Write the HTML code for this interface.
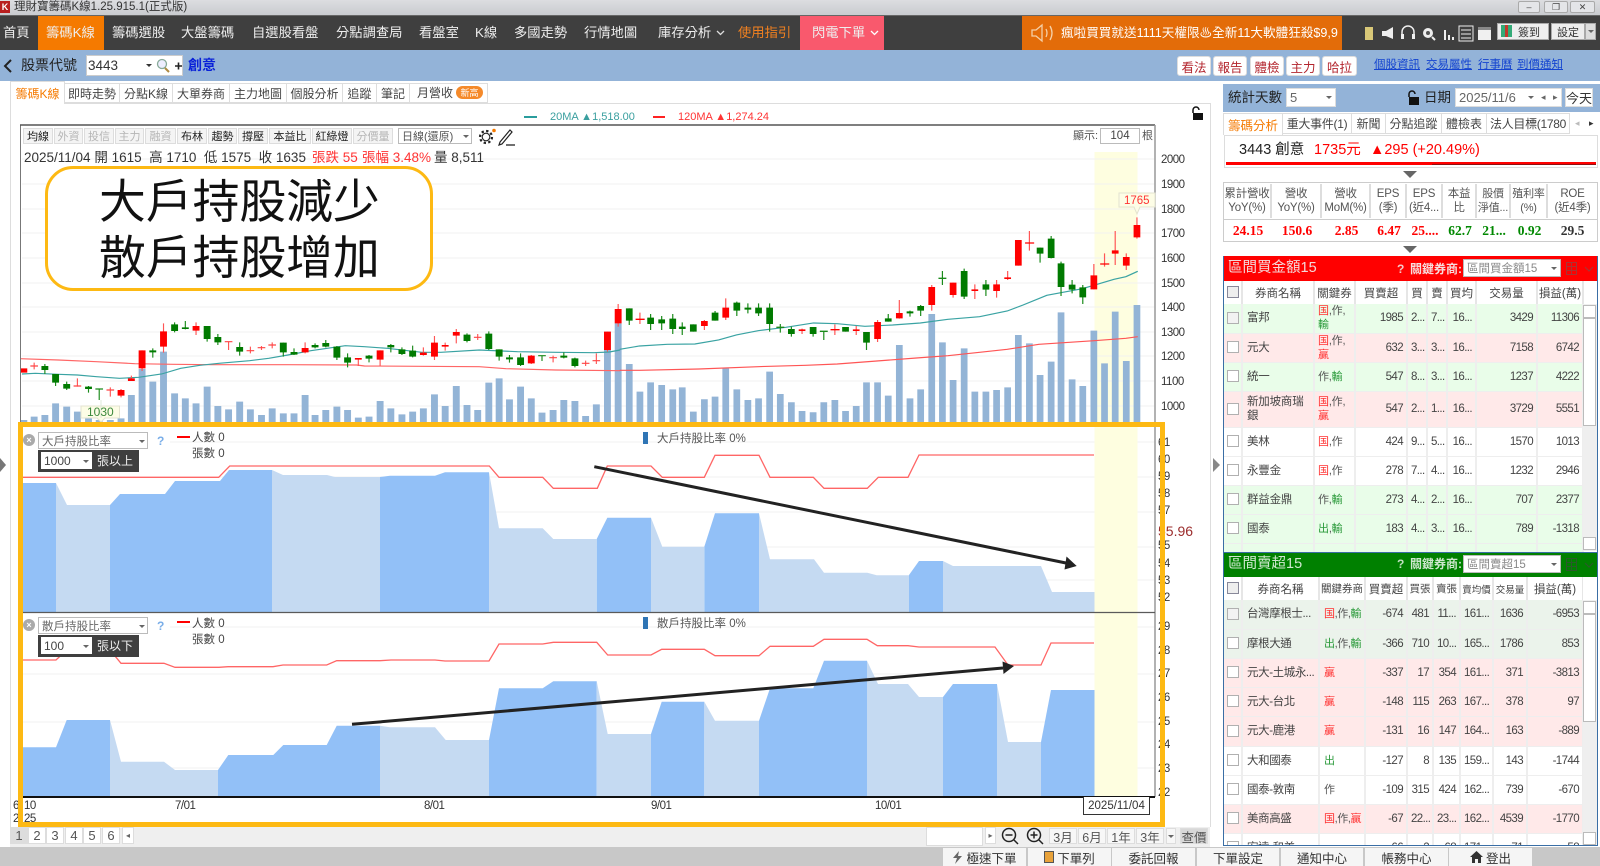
<!DOCTYPE html>
<html lang="zh-Hant"><head><meta charset="utf-8"><title>理財寶籌碼K線</title>
<style>
*{box-sizing:border-box}
html,body{margin:0;padding:0;background:#fff}
body{width:1600px;height:866px;overflow:hidden;font-family:"Liberation Sans","Noto Sans CJK TC",sans-serif}
#w{position:relative;width:1600px;height:866px;overflow:hidden;background:#fff;filter:blur(.35px);color:#333}
.a{position:absolute}
.t{position:absolute;white-space:nowrap;line-height:1}
.b{position:absolute;display:flex;align-items:center;justify-content:center;white-space:nowrap;overflow:hidden}
.n{color:#eee;font-size:13.3px}
.tb{background:#f4f4f4;border:1px solid #ddd;font-size:11px;color:#222;top:128px;height:16px}
.tb.d{color:#b5b5b5}
.rb{top:56px;height:20px;background:#fff;border-radius:3px;color:#b3262e;font-size:12.5px;border:1px solid #ddd}
.lk{top:60px;font-size:11.5px;color:#1444d0;text-decoration:underline}
.lt{top:83px;height:20px;border:1px solid #ddd;border-left:0;font-size:12px;color:#444;background:#fff}
.rt{top:113px;height:21px;border:1px solid #ddd;border-left:0;font-size:12px;color:#444;background:#fff}
.sel{background:#fff;border:1px solid #bbb;font-size:12px;color:#666;display:flex;align-items:center;padding-left:3px}
.car{position:absolute;width:0;height:0;border-left:3px solid transparent;border-right:3px solid transparent;border-top:3px solid #666}
table{position:absolute;border-collapse:collapse;table-layout:fixed;font-size:11.5px;color:#444}
th{font-weight:normal;background:#fff;border-right:2px solid #e6e6e6;font-size:11.5px;color:#444;padding:0;height:23px;white-space:nowrap;overflow:hidden}
td{padding:0 3px;border-right:2px solid #eee;border-bottom:1px solid #eee;white-space:nowrap;overflow:hidden;line-height:14px;letter-spacing:-.2px}
td.r{text-align:right;letter-spacing:-.6px;font-size:11.5px}
td.nm{font-size:11.5px;white-space:normal;padding-left:4px}
td.k{font-size:11px;white-space:normal;color:#555}
td.c{padding:0;text-align:center}
.sell td.nm,.sell td.k{white-space:nowrap;overflow:hidden}
.sell td.k{padding:0 0 0 4px;letter-spacing:-.4px}
.sell td.nm{letter-spacing:-.4px}
i.x{display:inline-block;width:12px;height:12px;border:1px solid #b0b0b0;background:#fff;vertical-align:middle}
s{text-decoration:none;color:#f33}u{text-decoration:none;color:#2a9a3a}
tr.g td{background:#e9fde9}tr.p td{background:#ffe9e9}tr.w td{background:#fff}tr.q td{background:#ebf3eb}
.sb{position:absolute;width:14px;background:#efefef}
.sb b{position:absolute;left:0;width:13px;background:#fff;border:1px solid #bbb;display:block}
.fh{position:absolute;top:184px;height:34px;font-size:11.5px;line-height:14px;color:#555;text-align:center;display:flex;align-items:center;justify-content:center;border-right:2px solid #ddd;white-space:nowrap;letter-spacing:-.2px}
.fv{position:absolute;top:221px;height:19px;font:bold 13.5px "Liberation Serif",serif;text-align:center;line-height:19px;white-space:nowrap}
.bt{position:absolute;top:848px;height:18px;background:#f5f5f5;font-size:12.5px;color:#333;display:flex;align-items:center;justify-content:center}
.ps{position:absolute;top:827px;width:18px;height:17px;background:#fff;border:1px solid #ddd;font-size:13px;color:#555;display:flex;align-items:center;justify-content:center}
.rg{position:absolute;top:828px;width:28px;height:16px;background:#f7f7f7;border:1px solid #ddd;font-size:12.5px;color:#555;display:flex;align-items:center;justify-content:center}
</style></head><body><div id="w">

<!-- title bar -->
<div class="a" style="left:0;top:0;width:1600px;height:15px;background:linear-gradient(#dcdde0,#c9cbcf)"></div>
<div class="b" style="left:0;top:1px;width:10px;height:12px;background:#b81e1e;color:#fff;font-size:9px;font-weight:bold">K</div>
<span class="t" style="left:14px;top:2px;font-size:11.5px;color:#333">理財寶籌碼K線1.25.915.1(正式版)</span>
<div class="b" style="left:1518px;top:1px;width:22px;height:12px;background:#e4e5e8;border:1px solid #aaa;border-radius:2px;font-size:9px;color:#444">–</div>
<div class="b" style="left:1544px;top:1px;width:24px;height:12px;background:#e4e5e8;border:1px solid #aaa;border-radius:2px;font-size:9px;color:#444">❐</div>
<div class="b" style="left:1570px;top:1px;width:25px;height:12px;background:#e4e5e8;border:1px solid #aaa;border-radius:2px;font-size:9px;color:#444">✕</div>

<!-- nav -->
<div class="a" style="left:0;top:15px;width:1600px;height:35px;background:#3f3f3f;border-top:1px solid #666"></div>
<div class="a" style="left:38px;top:16px;width:66px;height:34px;background:#f57a00"></div>
<span class="t n" style="left:3px;top:26px">首頁</span>
<span class="t n" style="left:46px;top:26px">籌碼K線</span>
<span class="t n" style="left:112px;top:26px">籌碼選股</span>
<span class="t n" style="left:181px;top:26px">大盤籌碼</span>
<span class="t n" style="left:252px;top:26px">自選股看盤</span>
<span class="t n" style="left:336px;top:26px">分點調查局</span>
<span class="t n" style="left:419px;top:26px">看盤室</span>
<span class="t n" style="left:475px;top:26px">K線</span>
<span class="t n" style="left:514px;top:26px">多國走勢</span>
<span class="t n" style="left:584px;top:26px">行情地圖</span>
<span class="t n" style="left:658px;top:26px">庫存分析</span>
<svg class="a" style="left:716px;top:30px" width="9" height="6" fill="none" stroke="#ddd" stroke-width="1.300"><path d="M1 1l3.500 3.500L8 1"/></svg>
<span class="t n" style="left:738px;top:26px;color:#f08020">使用指引</span>
<div class="a" style="left:800px;top:16px;width:84px;height:34px;background:#f9596d"></div>
<span class="t n" style="left:812px;top:26px">閃電下單</span>
<svg class="a" style="left:870px;top:30px" width="9" height="6" fill="none" stroke="#fff" stroke-width="1.300"><path d="M1 1l3.500 3.500L8 1"/></svg>
<div class="a" style="left:1022px;top:16px;width:320px;height:34px;background:#e36c09;overflow:hidden">
<svg class="a" style="left:9px;top:6px" width="26" height="22" viewBox="0 0 26 22" fill="none" stroke="#f5d0a8" stroke-width="1.3"><path d="M1 8h4l6-5v16l-6-5H1z"/><path d="M15 7q2 4 0 8M19 4q4 7 0 14"/></svg>
<span class="t" style="left:39px;top:11px;font-size:12.6px;color:#fff">瘋啦買買就送1111天權限♨全新11大軟體狂殺$9,9</span></div>
<!-- right icons -->
<svg class="a" style="left:1360px;top:24px" width="136" height="18" viewBox="0 0 136 18">
<rect x="5" y="3" width="8" height="13" fill="#d9c878"/>
<path d="M22 7h4l7-4v12l-7-3h-4z" fill="#eee"/>
<path d="M42 11v-3a6 6 0 0 1 12 0v3" fill="none" stroke="#eee" stroke-width="1.500"/><rect x="41" y="10" width="3" height="5" fill="#eee"/><rect x="52" y="10" width="3" height="5" fill="#eee"/>
<circle cx="68" cy="9" r="5" fill="#eee"/><circle cx="68" cy="9" r="2" fill="#555"/><path d="M72 13l3 3" stroke="#eee" stroke-width="2"/>
<path d="M84 6h2v10h-2zM88 11h2v5h-2zM92 13h2v3h-2z" fill="#eee"/>
<rect x="99" y="2" width="14" height="15" fill="none" stroke="#eee"/><path d="M101 6h10M101 10h10M101 14h10" stroke="#eee"/>
<rect x="118" y="3" width="13" height="13" fill="#f0f0f0"/><rect x="118" y="3" width="13" height="3" fill="#888"/>
</svg>
<div class="b" style="left:1497px;top:23px;width:52px;height:17px;background:#eee;border:1px solid #aaa;font-size:11px;color:#333;padding-left:12px">簽到</div>
<div class="a" style="left:1501px;top:25px;width:11px;height:12px;background:#c0392b;border-left:4px solid #3a7;border-right:4px solid #3a7"></div>
<div class="b" style="left:1551px;top:23px;width:34px;height:17px;background:#eee;border:1px solid #aaa;font-size:11px;color:#333">設定</div>
<div class="a" style="left:1585px;top:23px;width:11px;height:17px;background:#ddd;border:1px solid #aaa"></div><div class="car" style="left:1588px;top:30px"></div>

<!-- blue toolbar -->
<div class="a" style="left:0;top:50px;width:1600px;height:31px;background:#93b3d8"></div>
<svg class="a" style="left:3px;top:58px" width="10" height="16" fill="none" stroke="#222" stroke-width="2"><path d="M8 2L2 8l6 6"/></svg>
<span class="t" style="left:21px;top:58px;font-size:14px;color:#222">股票代號</span>
<div class="a" style="left:86px;top:55px;width:97px;height:21px;background:#fff;border:1px solid #ccc"></div>
<span class="t" style="left:88px;top:59px;font-size:13.5px;color:#333">3443</span>
<div class="car" style="left:146px;top:64px;border-top-color:#333"></div>
<svg class="a" style="left:155px;top:58px" width="28" height="16" fill="none"><circle cx="7" cy="6" r="4.500" stroke="#8a9" stroke-width="1.300" fill="#eef"/><path d="M10 10l4 4" stroke="#b08a40" stroke-width="2"/><path d="M20 8h7M23.500 4.500v7" stroke="#222" stroke-width="1.600"/></svg>
<span class="t" style="left:188px;top:58px;font-size:14px;color:#0a22d8;font-weight:bold">創意</span>
<div class="b rb" style="left:1177px;width:34px">看法</div>
<div class="b rb" style="left:1213px;width:34px">報告</div>
<div class="b rb" style="left:1250px;width:34px">體檢</div>
<div class="b rb" style="left:1286px;width:34px">主力</div>
<div class="b rb" style="left:1322px;width:35px">哈拉</div>
<span class="t lk" style="left:1374px">個股資訊</span>
<span class="t lk" style="left:1426px">交易屬性</span>
<span class="t lk" style="left:1478px">行事曆</span>
<span class="t lk" style="left:1517px">到價通知</span>

<!-- left gutter lines -->
<div class="a" style="left:10px;top:103px;width:1px;height:724px;background:#ddd"></div>
<div class="a" style="left:1210px;top:103px;width:1px;height:724px;background:#ddd"></div>
<div class="a" style="left:10px;top:103px;width:1200px;height:1px;background:#ddd"></div>
<svg class="a" style="left:0;top:458px" width="7" height="14"><path d="M0 0l6 7-6 7z" fill="#777"/></svg>
<svg class="a" style="left:1213px;top:458px" width="8" height="14"><path d="M0 0l7 7-7 7z" fill="#888"/></svg>

<!-- tabs -->
<div class="b" style="left:10px;top:81px;width:55px;height:23px;background:#fff;border:1px solid #ddd;border-bottom:0;font-size:12px;color:#f57a00">籌碼K線</div>
<div class="b lt" style="left:65px;width:55px">即時走勢</div>
<div class="b lt" style="left:120px;width:53px">分點K線</div>
<div class="b lt" style="left:173px;width:57px">大單券商</div>
<div class="b lt" style="left:230px;width:57px">主力地圖</div>
<div class="b lt" style="left:287px;width:56px">個股分析</div>
<div class="b lt" style="left:343px;width:34px">追蹤</div>
<div class="b lt" style="left:377px;width:33px">筆記</div>
<div class="lt a" style="left:410px;width:78px;padding:1px 0 0 7px;line-height:17px">月營收</div>
<div class="b" style="left:456px;top:86px;width:27px;height:13px;border-radius:7px;background:#f58a2a;color:#fff;font-size:9px">新高</div>

<!-- MA legend -->
<div class="a" style="left:524px;top:116px;width:13px;height:2px;background:#2a9d9d"></div>
<span class="t" style="left:550px;top:112px;font-size:11px;color:#3a9f9f">20MA ▲1,518.00</span>
<div class="a" style="left:653px;top:116px;width:12px;height:2px;background:#f22"></div>
<span class="t" style="left:678px;top:112px;font-size:11px;color:#f33">120MA ▲1,274.24</span>
<svg class="a" style="left:1190px;top:106px" width="14" height="14"><path d="M3 7V4a3 3 0 0 1 6 0" fill="none" stroke="#111" stroke-width="1.500"/><rect x="3" y="7" width="10" height="7" fill="#111"/></svg>

<!-- chart svg -->
<svg class="a" style="left:0;top:0" width="1600" height="866" viewBox="0 0 1600 866">
<rect x="1094.500" y="152" width="43" height="645" fill="#fefee0"/>
<path d="M22 159H1155M22 184H1155M22 209H1155M22 233H1155M22 258H1155M22 283H1155M22 307H1155M22 332H1155M22 356H1155M22 381H1155M22 406H1155M170 442H1155M22 477H1155M22 512H1155M22 547H1155M22 580H1155M170 627H1155M22 674H1155M22 722H1155M22 768H1155" stroke="#f1f1f1" fill="none"/>

<!-- main chart left part, zoom coords -->
<g transform="translate(20,290) scale(.3827,.3333)" fill="none">
<path stroke="#93b4d6" stroke-width="18" d="M10 390V403M37 380V403M65 375V403M93 340V403M122 350V403M150 365V403M179 385V403M207 390V403M236 390V403M264 385V403M291 315V403M319 237V403M347 275V403M375 185V403M404 310V403M432 325V403M460 340V403M489 290V403M517 348V403M545 358V403M574 335V403M602 358V403M631 375V403M659 355V403M688 370V403M716 370V403M745 315V403M771 375V403M799 360V403M828 350V403M856 360V403M884 383V403M912 380V403M941 333V403M969 355V403M998 373V403M1026 365V403M1054 355V403M1083 313V403M1111 348V403M1140 288V403M1168 345V403M1196 360V403M1225 278V403M1252 265V403M1279 328V403M1308 290V403M1336 325V403M1364 368V403M1393 360V403M1421 330V403M1450 333V403M1478 378V403M1506 343V403M1535 125V403M1563 100V403"/>
<path stroke="#f66" stroke-width="3.500" d="M0 206L100 210 200 215 300 221 400 223 500 224 700 224 880 225 900 228 1200 230 1270 236 1400 240 1568 242"/>
<path stroke="#3aa3a3" stroke-width="3.500" d="M5 252L40 250 100 253 150 255 200 260 260 265 310 262 370 252 420 235 470 226 520 220 600 212 650 205 700 195 760 182 850 167 900 170 960 175 1050 187 1100 187 1200 180 1300 185 1400 187 1500 188 1540 186 1568 180"/>
<path stroke="#f55" stroke-width="3" d="M37 218V238M150 265V290M236 292V320M264 297V322M291 257V273M319 181V243M375 100V188M460 97V135M545 155V180M602 170V190M631 168V180M659 157V175M745 157V190M884 204V228M941 181V228M1054 172V197M1083 138V210M1111 158V182M1140 117V160M1196 132V150M1336 195V222M1393 197V217M1478 212V228M1506 190V222M1535 125V185M1563 42V110"/>
<path stroke="#f00" stroke-width="18" d="M10 235V248M264 300V317M291 265V273M319 181V235M375 124V170M460 108V122M745 174V187M884 204V209M941 181V209M1054 188V195M1083 158V200M1111 165V170M1140 126V137M1336 197V220M1535 125V180M1563 57V100"/>
<path stroke="#f44" stroke-width="3.500" d="M27 228H47M140 288H160M226 300H246M535 155H555M592 182H612M621 173H641M649 165H669M1186 142H1206M1383 203H1403M1468 220H1488M1496 212H1516"/>
<path stroke="#1a8a1a" stroke-width="3" d="M65 222V252M93 252V288M122 275V300M179 288V308M207 297V330M347 175V203M404 97V127M432 93V118M489 108V155M517 132V165M574 157V197M688 158V200M716 175V195M771 160V175M799 150V172M828 168V210M856 190V232M912 195V217M969 162V187M998 172V195M1026 167V202M1168 130V157M1225 124V180M1252 178V212M1279 195V218M1308 190V228M1364 197V213M1421 187V205M1450 203V232"/>
<path stroke="#007a00" stroke-width="18" d="M65 228V240M93 252V278M122 282V296M179 290V297M347 181V187M404 103V123M432 112V117M489 108V147M517 141V157M574 171V185M688 158V187M716 186V194M771 165V172M799 159V170M828 170V203M856 202V218M912 197V206M969 165V172M998 178V192M1026 182V200M1168 134V153M1225 131V177M1252 178V200M1279 202V208M1308 202V225M1421 197V203M1450 205V228"/>
<path stroke="#1a8a1a" stroke-width="3.500" d="M197 297H217M1354 197H1374"/>
</g>
<!-- main chart right part -->
<g transform="translate(600,190) scale(.3954,.3333)" fill="none">
<path stroke="#93b4d6" stroke-width="17" d="M74 522V700M101 605V700M128 577V700M156 585V700M184 598V700M208 592V700M236 665V700M264 628V700M291 620V700M318 535V700M346 598V700M374 630V700M401 625V700M429 545V700M456 612V700M484 637V700M511 663V700M539 667V700M566 637V700M594 630V700M621 663V700M648 648V700M674 577V700M702 577V700M729 617V700M757 465V700M784 625V700M811 598V700M839 372V700M866 457V700M893 570V700M921 475V700M948 605V700M976 605V700M1003 600V700M1031 592V700M1058 435V700M1086 460V700M1113 555V700M1141 515V700M1166 367V700M1194 568V700M1221 588V700M1249 422V700M1276 520V700M1303 365V700M1331 513V700M1358 345V700"/>
<path stroke="#f55" stroke-width="3.500" d="M50 541L100 541 250 537 400 530 520 526 600 522 700 513 800 504 880 497 960 487 1030 478 1110 463 1250 452 1330 445 1360 440"/>
<path stroke="#3aa3a3" stroke-width="3.500" d="M50 478L100 468 170 463 240 462 300 450 345 435 400 422 470 412 540 399 600 401 670 409 740 405 810 399 880 388 960 380 1030 363 1070 345 1130 316 1220 296 1300 268 1330 260 1360 244"/>
<path stroke="#f55" stroke-width="3" d="M101 368V402M264 390V420M318 325V390M511 416V432M594 403V435M648 408V435M702 390V456M757 330V386M839 285V362M893 278V323M948 283V327M1003 270V323M1031 243V270M1058 150V227M1086 123V182M1249 222V298M1276 190V230M1303 123V225M1331 190V240M1358 82V146"/>
<path stroke="#f00" stroke-width="17" d="M264 393V408M318 353V383M511 418V423M648 418V423M702 396V447M757 369V385M839 291V345M893 278V315M948 298V303M1003 283V303M1031 262V267M1058 150V227M1249 256V298M1303 181V191M1331 201V227M1358 105V142"/>
<path stroke="#f00" stroke-width="4" d="M90 388H113M1075 159H1098M1265 222H1288M583 419H606"/>
<path stroke="#1a8a1a" stroke-width="3" d="M74 355V405M128 372V420M156 378V420M184 372V432M208 397V435M236 403V425M291 363V392M346 335V378M374 340V370M401 340V378M429 340V425M456 402V428M484 410V440M539 411V440M566 423V450M621 411V425M674 426V480M729 372V395M784 362V380M811 345V378M866 243V285M921 236V327M976 270V318M1113 173V218M1141 138V205M1166 215V318M1194 270V310M1221 285V342"/>
<path stroke="#007a00" stroke-width="17" d="M74 355V392M128 383V402M156 388V400M184 386V417M208 410V417M236 403V425M291 368V392M346 338V362M374 353V359M401 353V370M429 353V402M484 417V432M539 411V432M621 411V425M674 426V458M729 385V395M784 364V370M811 348V362M921 243V320M976 283V299M1113 173V191M1141 146V204M1166 220V291M1194 284V299M1221 292V322"/>
<path stroke="#1a8a1a" stroke-width="4" d="M446 412H466M556 424H576M856 265H876"/>
</g>

<!-- upper panel -->
<rect x="1094.500" y="427" width="43" height="185" fill="#fefee0"/>
<g fill="#92c0f7">
<path d="M23 483H56V612H23z"/>
<path d="M110 505L120 494H165L175 481H220L229 470H272V612H110z"/>
<path d="M380 477L390 475.700H435L445 472.300H489V612H380z"/>
<path d="M596.700 539L607.300 517.700H651V612H596.700z"/>
<path d="M704.300 546.700L715 513.300H759V612H704.300z"/>
<path d="M909 575L919 561H943V612H909z"/>
</g>
<g fill="#c5daf2">
<path d="M56 483L67 505H110V612H56z"/>
<path d="M272 470L283 475H327L335 477H380V612H272z"/>
<path d="M489 472.300L499 528.300H542.700L553.300 539H596.700V612H489z"/>
<path d="M651 517.700L662.300 546.700H704.300V612H651z"/>
<path d="M759 513.300L770 559.300H814L824 572.700H867.300L876.700 575.300H909V612H759z"/>
<path d="M943 561L953 566H1041L1052 592H1094.500V612H943z"/>
</g>
<path fill="none" stroke="#f66" stroke-width="1.300" d="M23 477.300H218.700L229.700 466H489.300L499 477.300H542.700L553.300 488.300H597.300L607.300 466H651L662.300 477.300H704.300L715 455.300H759L770 477.300H813.300L824 488.300H867.300L878.300 477.300H908L919 455H1094"/>

<!-- lower panel -->
<rect x="1094.500" y="612" width="43" height="185" fill="#fefee0"/>
<g fill="#92c0f7">
<path d="M23 747.300H56L66.700 720H110V796H23z"/>
<path d="M218 770L228.300 755H273.300L283.300 745H326.700L336.700 725.700H380V796H218z"/>
<path d="M489 740L499 688.300H542.700L553.300 681.300H596.700V796H489z"/>
<path d="M651 734L661.700 701.700H704.300V796H651z"/>
<path d="M759 720.700L770 688.300H813.300L824 660.700H867V796H759z"/>
<path d="M943 697L953 684H997V796H943z"/>
<path d="M1041 742L1051 690H1094.500V796H1041z"/>
</g>
<g fill="#c5daf2">
<path d="M110 720L121 761.700H164L175 770H218V796H110z"/>
<path d="M380 725.700L390 727.300H435L445.700 740H489V796H380z"/>
<path d="M596.700 681.300L607.700 734H651V796H596.700z"/>
<path d="M704.300 701.700L715 720.700H759V796H704.300z"/>
<path d="M867 660.700L878 684H908L919 697H943V796H867z"/>
<path d="M997 684L1008 742H1041V796H997z"/>
</g>
<path fill="none" stroke="#f66" stroke-width="1.300" d="M23 660H56L66.700 650H110L121 663.300H164L175 667.300H219L228 666.700H273L283 665H326.700L336.700 660.700H380L391 660H435L445 661H489L499 644H542.700L553.300 642.300H596.700L607.700 655H651L661.700 649.300H704.300L715 655.700H759L770 646.300H813.300L824 639.300H867L877.300 645.700H908L919 647H995L1008 665H1041L1051 643H1094"/>

<!-- frame lines -->
<path d="M20.500 125V797" stroke="#777" fill="none"/>
<path d="M20 125H1155" stroke="#555" stroke-width="1.500" fill="none"/>
<path d="M1155 125V797" stroke="#999" stroke-width="1.500" fill="none"/>
<path d="M22 612.500H1155" stroke="#5a5a5a" stroke-width="1.200" fill="none"/>
<path d="M22 797H1155" stroke="#111" stroke-width="2" fill="none"/>

<!-- arrows -->
<path d="M594.300 466.700L1066 563" stroke="#222" stroke-width="3" fill="none"/>
<path d="M1076.700 566L1066.500 556.500 1064.500 569.500z" fill="#222"/>
<path d="M352 724.300L1003 668" stroke="#222" stroke-width="3" fill="none"/>
<path d="M1014 666L1002.500 661.500 1003.500 674z" fill="#222"/>

<!-- axis labels -->
<g font-family="Liberation Sans,sans-serif" font-size="11.500" fill="#333" letter-spacing="-.5">
<text x="1161" y="163">2000</text><text x="1161" y="188">1900</text><text x="1161" y="213">1800</text><text x="1161" y="237">1700</text><text x="1161" y="262">1600</text><text x="1161" y="287">1500</text><text x="1161" y="311">1400</text><text x="1161" y="336">1300</text><text x="1161" y="360">1200</text><text x="1161" y="385">1100</text><text x="1161" y="410">1000</text>
<text x="1158" y="446">61</text><text x="1158" y="463">60</text><text x="1158" y="480">59</text><text x="1158" y="497">58</text><text x="1158" y="514">57</text><text x="1158" y="549">55</text><text x="1158" y="567">54</text><text x="1158" y="584">53</text><text x="1158" y="601">52</text>
<text x="1158" y="630">29</text><text x="1158" y="654">28</text><text x="1158" y="677">27</text><text x="1158" y="701">26</text><text x="1158" y="725">25</text><text x="1158" y="748">24</text><text x="1158" y="772">23</text><text x="1158" y="796">22</text>
<text x="175" y="809">7/01</text><text x="424" y="809">8/01</text><text x="651" y="809">9/01</text><text x="875" y="809">10/01</text>
<text x="13" y="809">6</text><text x="24" y="809">10</text><text x="13" y="822">2</text><text x="24" y="822">25</text>
</g>
<text x="1158" y="536" font-family="Liberation Sans,sans-serif" font-size="14" fill="#9b2c2c">55.96</text>

<!-- tooltips -->
<path d="M81 406H119.500V418H105L101 422 97 418H81z" fill="#fdfde6" stroke="#e3e3d0"/>
<path d="M101 418V400" stroke="#dfe8d8" stroke-width="1"/>
<text x="87" y="416" font-family="Liberation Sans,sans-serif" font-size="12" fill="#3d8a3d">1030</text>
<path d="M1119 193H1155V207H1140L1137 214 1134 207H1119z" fill="#fdfde6" stroke="#e3e3d0"/>
<text x="1124" y="204" font-family="Liberation Sans,sans-serif" font-size="11.500" fill="#f33">1765</text>

<!-- orange frame -->
<rect x="20.500" y="424.500" width="1142" height="400" fill="none" stroke="#fdb913" stroke-width="5"/>
</svg>

<!-- callout -->
<div class="a" style="left:45px;top:166px;width:388px;height:125px;background:#fff;border:3px solid #fdb913;border-radius:28px"></div>
<span class="t" style="left:99px;top:179px;font-size:46.800px;color:#111">大戶持股減少</span>
<span class="t" style="left:99px;top:235px;font-size:46.800px;color:#111">散戶持股增加</span>

<!-- chart toolbar -->
<div class="b tb" style="left:23px;width:30px">均線</div>
<div class="b tb d" style="left:54px;width:29px">外資</div>
<div class="b tb d" style="left:84px;width:30px">投信</div>
<div class="b tb d" style="left:115px;width:29px">主力</div>
<div class="b tb d" style="left:145px;width:31px">融資</div>
<div class="b tb" style="left:177px;width:30px">布林</div>
<div class="b tb" style="left:208px;width:29px">趨勢</div>
<div class="b tb" style="left:238px;width:30px">撐壓</div>
<div class="b tb" style="left:269px;width:42px">本益比</div>
<div class="b tb" style="left:312px;width:40px">紅綠燈</div>
<div class="b tb d" style="left:353px;width:40px">分價量</div>
<div class="sel a" style="left:398px;top:128px;width:74px;height:16px;font-size:11px;color:#555">日線(還原)</div><div class="car" style="left:463px;top:135px"></div>
<svg class="a" style="left:477px;top:128px" width="40" height="18" fill="none" stroke="#222"><circle cx="9" cy="9" r="6" stroke-width="2.200" stroke-dasharray="2.350 2.350"/><circle cx="9" cy="9" r="3.800" stroke-width="1.100"/><circle cx="17" cy="2.500" r="1.800" fill="#f57a00" stroke="none"/><path d="M23 14L33 2l2 2-10 12-3 1z" stroke-width="1.200"/><path d="M29 17h9" stroke-width="1.300"/></svg>
<span class="t" style="left:24px;top:151px;font-size:13.500px;color:#333">2025/11/04 開 1615&nbsp; 高 1710&nbsp; 低 1575&nbsp; 收 1635</span>
<span class="t" style="left:312px;top:151px;font-size:13.500px;color:#f33">張跌 55</span>
<span class="t" style="left:362px;top:151px;font-size:13.500px;color:#f33">張幅 3.48%</span>
<span class="t" style="left:434px;top:151px;font-size:13.500px;color:#333">量 8,511</span>
<span class="t" style="left:1073px;top:131px;font-size:11px;color:#555">顯示:</span>
<div class="b" style="left:1100px;top:128px;width:40px;height:16px;background:#fff;border:1px solid #bbb;font-size:11.500px;color:#444">104</div>
<span class="t" style="left:1142px;top:131px;font-size:11px;color:#555">根</span>

<!-- indicator controls upper -->
<div class="b" style="left:23px;top:434px;width:12px;height:12px;border-radius:50%;background:#aaa;color:#fff;font-size:9px;font-weight:bold">×</div>
<div class="sel a" style="left:38px;top:432px;width:110px;height:17px;font-size:11.500px">大戶持股比率</div><div class="car" style="left:139px;top:440px"></div>
<div class="a" style="left:38px;top:450px;width:101px;height:22px;background:#3f3f3f"></div>
<div class="a" style="left:41px;top:452px;width:51px;height:17px;background:#fff;font-size:12px;color:#444;padding:2px 0 0 3px;line-height:14px">1000</div><div class="car" style="left:83px;top:460px"></div>
<span class="t" style="left:97px;top:455px;font-size:12px;color:#eee">張以上</span>
<span class="t" style="left:157px;top:435px;font-size:12px;color:#7aaee8;font-weight:bold">?</span>
<div class="a" style="left:177px;top:436px;width:13px;height:2px;background:#f00"></div>
<span class="t" style="left:192px;top:433px;font-size:11.500px;color:#444">人數 0</span>
<span class="t" style="left:192px;top:449px;font-size:11.500px;color:#444">張數 0</span>
<div class="a" style="left:643px;top:432px;width:5px;height:12px;background:#2f75b5"></div>
<span class="t" style="left:657px;top:434px;font-size:11.500px;color:#555">大戶持股比率 0%</span>

<!-- indicator controls lower -->
<div class="b" style="left:23px;top:619px;width:12px;height:12px;border-radius:50%;background:#aaa;color:#fff;font-size:9px;font-weight:bold">×</div>
<div class="sel a" style="left:38px;top:617px;width:110px;height:17px;font-size:11.500px">散戶持股比率</div><div class="car" style="left:139px;top:625px"></div>
<div class="a" style="left:38px;top:635px;width:101px;height:22px;background:#3f3f3f"></div>
<div class="a" style="left:41px;top:637px;width:51px;height:17px;background:#fff;font-size:12px;color:#444;padding:2px 0 0 3px;line-height:14px">100</div><div class="car" style="left:83px;top:645px"></div>
<span class="t" style="left:97px;top:640px;font-size:12px;color:#eee">張以下</span>
<span class="t" style="left:157px;top:620px;font-size:12px;color:#7aaee8;font-weight:bold">?</span>
<div class="a" style="left:177px;top:621px;width:13px;height:2px;background:#f00"></div>
<span class="t" style="left:192px;top:619px;font-size:11.500px;color:#444">人數 0</span>
<span class="t" style="left:192px;top:635px;font-size:11.500px;color:#444">張數 0</span>
<div class="a" style="left:643px;top:617px;width:5px;height:12px;background:#2f75b5"></div>
<span class="t" style="left:657px;top:619px;font-size:11.500px;color:#555">散戶持股比率 0%</span>

<div class="b" style="left:1083px;top:797px;width:67px;height:18px;background:#fff;border:1px solid #333;border-top:0;font-size:11.500px;color:#333">2025/11/04</div>

<!-- bottom strip -->
<div class="a" style="left:10px;top:827px;width:1200px;height:20px;background:#efefef"></div>
<div class="ps" style="left:10px;background:#ddd">1</div><div class="ps" style="left:28px">2</div><div class="ps" style="left:46px">3</div><div class="ps" style="left:65px">4</div><div class="ps" style="left:83px">5</div><div class="ps" style="left:102px">6</div>
<div class="b" style="left:122px;top:827px;width:12px;height:17px;background:#fff;border:1px solid #ddd;font-size:8px;color:#666">◂</div>
<div class="a" style="left:926px;top:827px;width:57px;height:19px;background:#fff;border:1px solid #ddd"></div>
<div class="b" style="left:985px;top:827px;width:11px;height:17px;background:#fff;border:1px solid #ddd;font-size:8px;color:#666">▸</div>
<svg class="a" style="left:1000px;top:826px" width="46" height="20" fill="none" stroke="#222" stroke-width="1.500"><circle cx="9" cy="9" r="6.500"/><path d="M5.500 9h7M14 14l4 4"/><circle cx="34" cy="9" r="6.500"/><path d="M30.500 9h7M34 5.500v7M39 14l4 4"/></svg>
<div class="rg" style="left:1049px">3月</div><div class="rg" style="left:1078px">6月</div><div class="rg" style="left:1107px">1年</div><div class="rg" style="left:1136px">3年</div>
<div class="a" style="left:1166px;top:828px;width:10px;height:16px;background:#f7f7f7;border:1px solid #ddd"></div><div class="car" style="left:1168px;top:835px"></div>
<div class="rg" style="left:1180px;background:#d8d8d8;color:#555">查價</div>

<div class="a" style="left:0;top:847px;width:1600px;height:19px;background:#c8c8c8"></div>
<div class="bt" style="left:943px;width:83px"><svg width="11" height="13" style="margin-right:3px"><path d="M7 0L1 7h4l-2 6 7-8H6z" fill="#666"/></svg>極速下單</div>
<div class="bt" style="left:1028px;width:83px"><span style="display:inline-block;width:10px;height:12px;background:#e8a23a;border:1px solid #555;margin-right:3px"></span>下單列</div>
<div class="bt" style="left:1112px;width:83px">委託回報</div>
<div class="bt" style="left:1197px;width:82px">下單設定</div>
<div class="bt" style="left:1281px;width:82px">通知中心</div>
<div class="bt" style="left:1365px;width:83px">帳務中心</div>
<div class="bt" style="left:1449px;width:83px"><svg width="13" height="12" style="margin-right:3px"><path d="M6.500 0L13 6h-2v6H8V8H5v4H2V6H0z" fill="#333"/></svg>登出</div>

<!-- right panel -->
<div class="a" style="left:1223px;top:84px;width:377px;height:28px;background:#93b3d8"></div>
<span class="t" style="left:1228px;top:91px;font-size:13.500px;color:#222">統計天數</span>
<div class="sel a" style="left:1286px;top:88px;width:50px;height:19px;font-size:13px;border-color:#ddd">5</div><div class="car" style="left:1326px;top:96px"></div>
<svg class="a" style="left:1406px;top:90px" width="14" height="15"><path d="M3 7V4a3 3 0 0 1 6 0" fill="none" stroke="#111" stroke-width="1.500"/><rect x="3" y="7" width="10" height="8" fill="#111"/></svg>
<span class="t" style="left:1424px;top:91px;font-size:13.500px;color:#222">日期</span>
<div class="sel a" style="left:1455px;top:88px;width:107px;height:19px;font-size:13px;border-color:#ddd">2025/11/6</div><div class="car" style="left:1528px;top:96px"></div>
<span class="t" style="left:1541px;top:93px;font-size:9px;color:#666">◂</span><span class="t" style="left:1553px;top:93px;font-size:9px;color:#666">▸</span>
<div class="b" style="left:1565px;top:88px;width:28px;height:19px;background:#fff;border:1px solid #ddd;font-size:13px;color:#333">今天</div>

<div class="b" style="left:1223px;top:113px;width:60px;height:22px;background:#fff;border:1px solid #ddd;border-bottom:0;font-size:12.500px;color:#f57a00">籌碼分析</div>
<div class="b rt" style="left:1283px;width:69px;letter-spacing:-.3px">重大事件(1)</div>
<div class="b rt" style="left:1352px;width:34px">新聞</div>
<div class="b rt" style="left:1386px;width:56px">分點追蹤</div>
<div class="b rt" style="left:1442px;width:45px">體檢表</div>
<div class="b rt" style="left:1487px;width:83px;justify-content:flex-start;padding-left:3px;letter-spacing:-.3px">法人目標(1780</div>
<span class="t" style="left:1575px;top:119px;font-size:9px;color:#bbb">◂</span><span class="t" style="left:1589px;top:119px;font-size:9px;color:#333">▸</span>

<div class="a" style="left:1224px;top:135px;width:374px;height:33px;background:#fff;border:1px solid #ddd"></div>
<span class="t" style="left:1239px;top:143px;font-size:14.500px;color:#222">3443 創意</span>
<span class="t" style="left:1314px;top:143px;font-size:14.500px;color:#f00">1735元</span>
<span class="t" style="left:1370px;top:143px;font-size:14.500px;color:#f00">▲295 (+20.49%)</span>
<div class="a" style="left:1226px;top:162px;width:370px;height:3px;background:#f00"></div>
<div class="a" style="left:1432px;top:164px;width:164px;height:1px;background:#901010"></div>

<svg class="a" style="left:1403px;top:171px" width="14" height="7"><path d="M0 0h14L7 7z" fill="#666"/></svg>
<svg class="a" style="left:1403px;top:246px" width="14" height="7"><path d="M0 0h14L7 7z" fill="#666"/></svg>

<!-- fundamentals -->
<div class="a" style="left:1223px;top:182px;width:375px;height:60px;background:#fff;border:1px solid #ccc"></div>
<div class="a" style="left:1224px;top:219px;width:373px;height:1px;background:#ccc"></div>
<div class="fh" style="left:1224px;width:48px">累計營收<br>YoY(%)</div>
<div class="fh" style="left:1272px;width:50px">營收<br>YoY(%)</div>
<div class="fh" style="left:1322px;width:49px">營收<br>MoM(%)</div>
<div class="fh" style="left:1371px;width:36px">EPS<br>(季)</div>
<div class="fh" style="left:1407px;width:36px">EPS<br>(近4...</div>
<div class="fh" style="left:1443px;width:34px">本益<br>比</div>
<div class="fh" style="left:1477px;width:34px;font-size:11px">股價<br>淨值...</div>
<div class="fh" style="left:1511px;width:37px;font-size:11px">殖利率<br>(%)</div>
<div class="fh" style="left:1548px;width:49px;border-right:0">ROE<br>(近4季)</div>
<div class="fv" style="left:1224px;width:48px;color:#f00">24.15</div>
<div class="fv" style="left:1272px;width:50px;color:#f00">150.6</div>
<div class="fv" style="left:1322px;width:49px;color:#f00">2.85</div>
<div class="fv" style="left:1371px;width:36px;color:#f00">6.47</div>
<div class="fv" style="left:1407px;width:36px;color:#f00">25....</div>
<div class="fv" style="left:1443px;width:34px;color:#080">62.7</div>
<div class="fv" style="left:1477px;width:34px;color:#080">21...</div>
<div class="fv" style="left:1511px;width:37px;color:#080">0.92</div>
<div class="fv" style="left:1548px;width:49px;color:#333">29.5</div>

<!-- buy panel -->
<div class="a" style="left:1223px;top:256px;width:375px;height:296px;background:#fff;border-left:1px solid #3a6ea5;border-right:1px solid #3a6ea5"></div>
<div class="a" style="left:1224px;top:256px;width:373px;height:25px;background:#f00"></div>
<span class="t" style="left:1228px;top:261px;font-size:14.500px;color:#f4d8d8">區間買金額15</span>
<span class="t" style="left:1397px;top:263px;font-size:12px;color:#f4c8c8;font-weight:bold">?</span>
<span class="t" style="left:1410px;top:263px;font-size:12px;color:#f8dede;font-weight:bold">關鍵券商:</span>
<div class="sel a" style="left:1463px;top:259px;width:98px;height:18px;font-size:11.500px;color:#888">區間買金額15</div><div class="car" style="left:1551px;top:267px"></div>
<svg class="a" style="left:1566px;top:262px" width="28" height="13" fill="none" stroke="#a33"><path d="M.5 .5h10v12h-10zM.5 4.500h10M.5 8.500h10M5.500 .5v12"/><path d="M19 5l4 4 4-4" stroke-width="1.200"/></svg>
<div class="a" style="left:1224px;top:281px;width:373px;height:271px;overflow:hidden">
<table style="left:0;top:0;width:359px">
<colgroup><col style="width:18px"><col style="width:72px"><col style="width:41px"><col style="width:52px"><col style="width:20px"><col style="width:20px"><col style="width:29px"><col style="width:61px"><col style="width:46px"></colgroup>
<tr><th><i class="x" style="background:#eee;border-color:#889"></i></th><th>券商名稱</th><th>關鍵券</th><th>買賣超</th><th>買</th><th>賣</th><th>買均</th><th>交易量</th><th>損益(萬)</th></tr>
<tr class="g" style="height:29px"><td class="c"><i class="x" style="background:#f2f2f2"></i></td><td class="nm">富邦</td><td class="k"><s>国</s>,作,<br><u>輸</u></td><td class="r">1985</td><td class="r">2...</td><td class="r">7...</td><td class="r">16...</td><td class="r">3429</td><td class="r">11306</td></tr>
<tr class="p" style="height:29px"><td class="c"><i class="x"></i></td><td class="nm">元大</td><td class="k"><s>国</s>,作,<br><s>贏</s></td><td class="r">632</td><td class="r">3...</td><td class="r">3...</td><td class="r">16...</td><td class="r">7158</td><td class="r">6742</td></tr>
<tr class="g" style="height:29px"><td class="c"><i class="x"></i></td><td class="nm">統一</td><td class="k">作,<u>輸</u></td><td class="r">547</td><td class="r">8...</td><td class="r">3...</td><td class="r">16...</td><td class="r">1237</td><td class="r">4222</td></tr>
<tr class="p" style="height:36px"><td class="c"><i class="x"></i></td><td class="nm">新加坡商瑞銀</td><td class="k"><s>国</s>,作,<br><s>贏</s></td><td class="r">547</td><td class="r">2...</td><td class="r">1...</td><td class="r">16...</td><td class="r">3729</td><td class="r">5551</td></tr>
<tr class="w" style="height:29px"><td class="c"><i class="x"></i></td><td class="nm">美林</td><td class="k"><s>国</s>,作</td><td class="r">424</td><td class="r">9...</td><td class="r">5...</td><td class="r">16...</td><td class="r">1570</td><td class="r">1013</td></tr>
<tr class="w" style="height:29px"><td class="c"><i class="x"></i></td><td class="nm">永豐金</td><td class="k"><s>国</s>,作</td><td class="r">278</td><td class="r">7...</td><td class="r">4...</td><td class="r">16...</td><td class="r">1232</td><td class="r">2946</td></tr>
<tr class="g" style="height:29px"><td class="c"><i class="x"></i></td><td class="nm">群益金鼎</td><td class="k">作,<u>輸</u></td><td class="r">273</td><td class="r">4...</td><td class="r">2...</td><td class="r">16...</td><td class="r">707</td><td class="r">2377</td></tr>
<tr class="g" style="height:29px"><td class="c"><i class="x"></i></td><td class="nm">國泰</td><td class="k"><u>出</u>,<u>輸</u></td><td class="r">183</td><td class="r">4...</td><td class="r">3...</td><td class="r">16...</td><td class="r">789</td><td class="r">-1318</td></tr>
<tr class="g" style="height:12px"><td></td><td></td><td></td><td></td><td></td><td></td><td></td><td></td><td></td></tr>
</table>
</div>
<div class="sb" style="left:1583px;top:304px;height:247px"><b style="top:1px;height:13px"></b><b style="top:14px;height:108px"></b><b style="top:233px;height:13px"></b></div>

<!-- sell panel -->
<div class="a" style="left:1223px;top:552px;width:375px;height:294px;background:#fff;border:1px solid #3a6ea5"></div>
<div class="a" style="left:1224px;top:553px;width:373px;height:24px;background:#008000"></div>
<span class="t" style="left:1228px;top:557px;font-size:14.500px;color:#cfe8cf">區間賣超15</span>
<span class="t" style="left:1397px;top:558px;font-size:12px;color:#bfe0bf;font-weight:bold">?</span>
<span class="t" style="left:1410px;top:558px;font-size:12px;color:#cfe8cf;font-weight:bold">關鍵券商:</span>
<div class="sel a" style="left:1463px;top:555px;width:98px;height:18px;font-size:11.500px;color:#888">區間賣超15</div><div class="car" style="left:1551px;top:563px"></div>
<svg class="a" style="left:1566px;top:558px" width="28" height="13" fill="none" stroke="#2a5a2a"><path d="M.5 .5h10v12h-10zM.5 4.500h10M.5 8.500h10M5.500 .5v12"/><path d="M19 5l4 4 4-4" stroke-width="1.200"/></svg>
<div class="a" style="left:1224px;top:577px;width:359px;height:268px;overflow:hidden">
<table class="sell" style="left:0;top:0;width:359px">
<colgroup><col style="width:18px"><col style="width:77px"><col style="width:46px"><col style="width:42px"><col style="width:26px"><col style="width:27px"><col style="width:33px"><col style="width:34px"><col style="width:56px"></colgroup>
<tr><th><i class="x" style="background:#eee;border-color:#889"></i></th><th>券商名稱</th><th style="font-size:10.500px">關鍵券商</th><th>買賣超</th><th style="font-size:10.500px">買張</th><th style="font-size:10.500px">賣張</th><th style="font-size:9.500px">賣均價</th><th style="font-size:9.500px">交易量</th><th>損益(萬)</th></tr>
<tr class="q" style="height:29px"><td class="c"><i class="x" style="background:#f2f2f2"></i></td><td class="nm">台灣摩根士...</td><td class="k"><s>国</s>,作,<u>輸</u></td><td class="r">-674</td><td class="r">481</td><td class="r">11...</td><td class="r">161...</td><td class="r">1636</td><td class="r">-6953</td></tr>
<tr class="q" style="height:29px"><td class="c"><i class="x"></i></td><td class="nm">摩根大通</td><td class="k"><u>出</u>,作,<u>輸</u></td><td class="r">-366</td><td class="r">710</td><td class="r">10...</td><td class="r">165...</td><td class="r">1786</td><td class="r">853</td></tr>
<tr class="p" style="height:29px"><td class="c"><i class="x"></i></td><td class="nm">元大-土城永...</td><td class="k"><s>贏</s></td><td class="r">-337</td><td class="r">17</td><td class="r">354</td><td class="r">161...</td><td class="r">371</td><td class="r">-3813</td></tr>
<tr class="p" style="height:29px"><td class="c"><i class="x"></i></td><td class="nm">元大-台北</td><td class="k"><s>贏</s></td><td class="r">-148</td><td class="r">115</td><td class="r">263</td><td class="r">167...</td><td class="r">378</td><td class="r">97</td></tr>
<tr class="p" style="height:30px"><td class="c"><i class="x"></i></td><td class="nm">元大-鹿港</td><td class="k"><s>贏</s></td><td class="r">-131</td><td class="r">16</td><td class="r">147</td><td class="r">164...</td><td class="r">163</td><td class="r">-889</td></tr>
<tr class="w" style="height:29px"><td class="c"><i class="x"></i></td><td class="nm">大和國泰</td><td class="k"><u>出</u></td><td class="r">-127</td><td class="r">8</td><td class="r">135</td><td class="r">159...</td><td class="r">143</td><td class="r">-1744</td></tr>
<tr class="w" style="height:29px"><td class="c"><i class="x"></i></td><td class="nm">國泰-敦南</td><td class="k">作</td><td class="r">-109</td><td class="r">315</td><td class="r">424</td><td class="r">162...</td><td class="r">739</td><td class="r">-670</td></tr>
<tr class="p" style="height:29px"><td class="c"><i class="x"></i></td><td class="nm">美商高盛</td><td class="k"><s>国</s>,作,<s>贏</s></td><td class="r">-67</td><td class="r">22...</td><td class="r">23...</td><td class="r">162...</td><td class="r">4539</td><td class="r">-1770</td></tr>
<tr class="w" style="height:29px"><td class="c"><i class="x"></i></td><td class="nm">宏遠-和美</td><td class="k"></td><td class="r">-66</td><td class="r">2</td><td class="r">68</td><td class="r">171...</td><td class="r">71</td><td class="r">-58</td></tr>
</table>
</div>
<div class="sb" style="left:1583px;top:600px;height:245px"><b style="top:1px;height:13px"></b><b style="top:14px;height:108px"></b><b style="top:232px;height:13px"></b></div>

</div></body></html>
